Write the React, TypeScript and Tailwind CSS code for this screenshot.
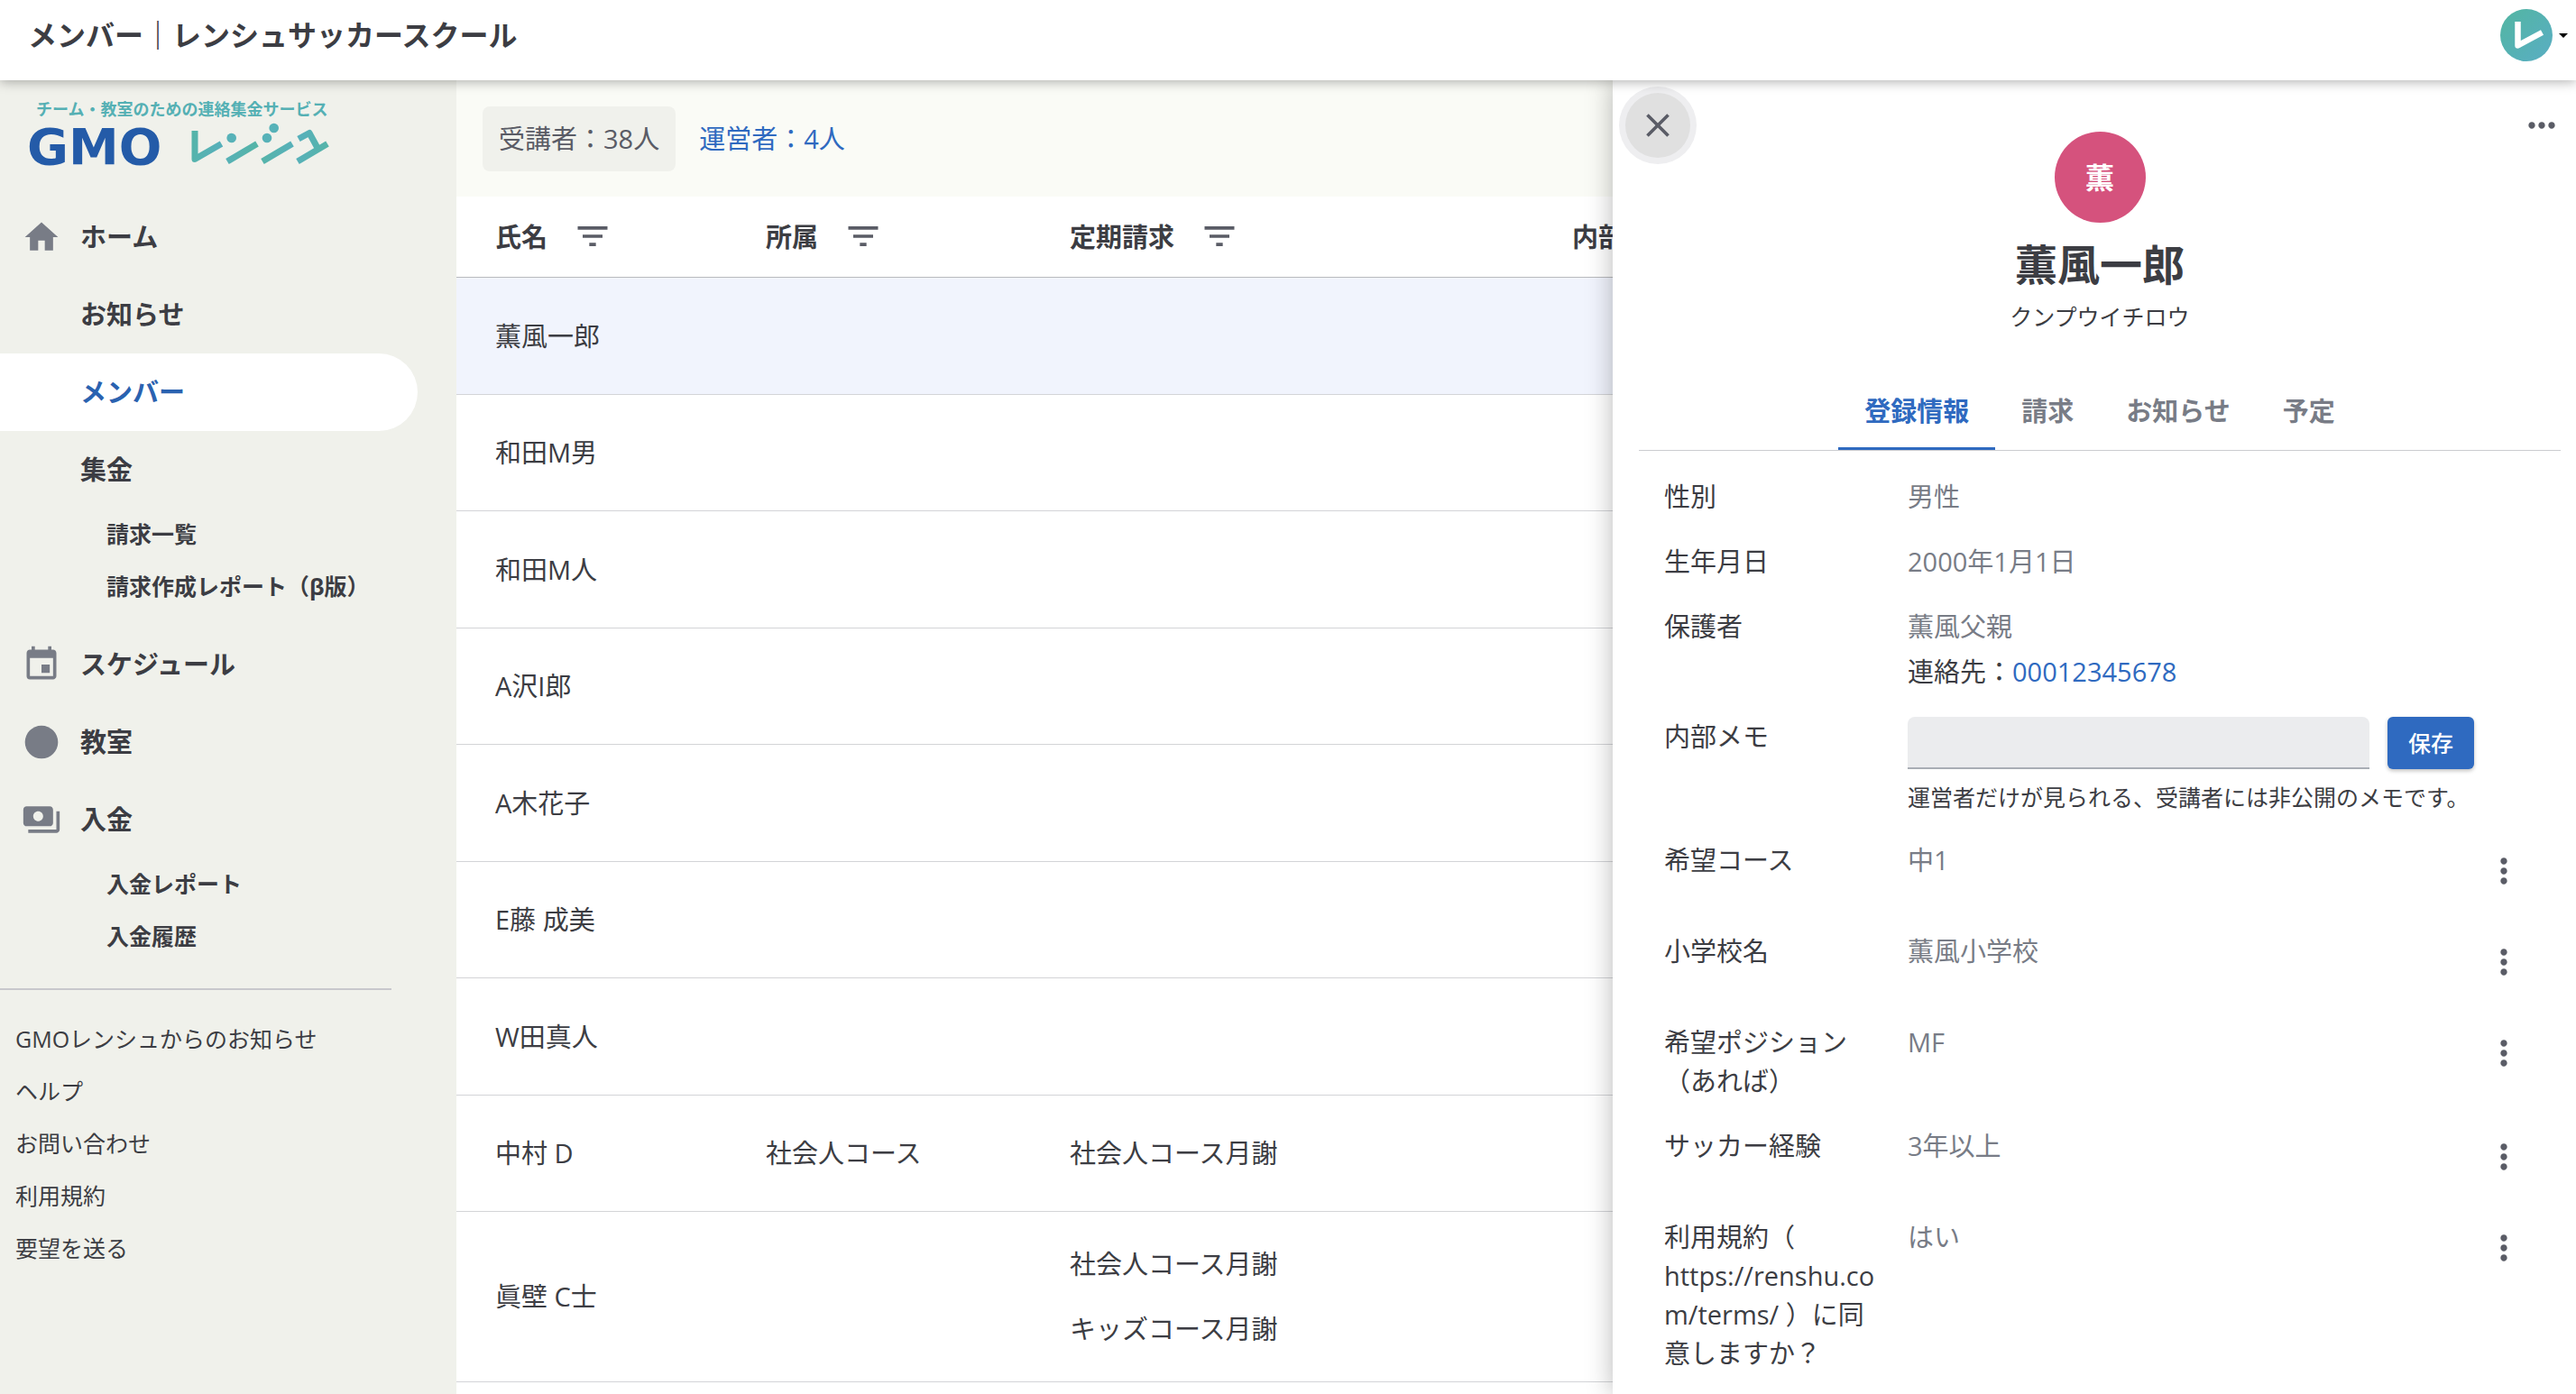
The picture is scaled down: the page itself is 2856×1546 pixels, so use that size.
import { useState } from 'react';
import type { IconType } from 'react-icons';
import {
  MdArrowDropDown,
  MdClose,
  MdEvent,
  MdFilterList,
  MdHome,
  MdLens,
  MdMoreHoriz,
  MdMoreVert,
  MdPayments,
} from 'react-icons/md';

type NavItem = {
  label: string;
  icon?: IconType;
  active?: boolean;
  children?: string[];
};

const navItems: NavItem[] = [
  { label: 'ホーム', icon: MdHome },
  { label: 'お知らせ' },
  { label: 'メンバー', active: true },
  { label: '集金', children: ['請求一覧', '請求作成レポート（β版）'] },
  { label: 'スケジュール', icon: MdEvent },
  { label: '教室', icon: MdLens },
  { label: '入金', icon: MdPayments, children: ['入金レポート', '入金履歴'] },
];

const footerLinks = ['GMOレンシュからのお知らせ', 'ヘルプ', 'お問い合わせ', '利用規約', '要望を送る'];

const members = [
  { name: '薫風一郎', group: '', billing: [] },
  { name: '和田M男', group: '', billing: [] },
  { name: '和田M人', group: '', billing: [] },
  { name: 'A沢I郎', group: '', billing: [] },
  { name: 'A木花子', group: '', billing: [] },
  { name: 'E藤 成美', group: '', billing: [] },
  { name: 'W田真人', group: '', billing: [] },
  { name: '中村 D', group: '社会人コース', billing: ['社会人コース月謝'] },
  { name: '眞壁 C士', group: '', billing: ['社会人コース月謝', 'キッズコース月謝'] },
];

const tabs = ['登録情報', '請求', 'お知らせ', '予定'];

const customFields = [
  { label: '希望コース', value: '中1' },
  { label: '小学校名', value: '薫風小学校' },
  { label: '希望ポジション（あれば）', value: 'MF' },
  { label: 'サッカー経験', value: '3年以上' },
  { label: '利用規約（ https://renshu.com/terms/ ）に同意しますか？', value: 'はい' },
];

const Logo = () => (
  <svg viewBox="0 0 370 100" className="w-[370px] h-[100px]" role="img" aria-label="GMOレンシュ">
    <defs>
      <linearGradient id="brand" gradientUnits="userSpaceOnUse" x1="190" y1="40" x2="345" y2="80">
        <stop offset="0" stopColor="#55b5a6" />
        <stop offset="0.25" stopColor="#57b0bb" />
        <stop offset="0.5" stopColor="#55b5a6" />
        <stop offset="0.75" stopColor="#57b0bb" />
        <stop offset="1" stopColor="#55b5a6" />
      </linearGradient>
    </defs>
    <text x="20" y="28" fontSize="18" fontWeight="700" fill="#55b0b4">
      チーム・教室のための連絡集金サービス
    </text>
    <text x="10" y="82" fontSize="56" fontWeight="700" fontFamily="DejaVu Sans, sans-serif" fill="#245ba8">
      GMO
    </text>
    <g fill="none" stroke="url(#brand)" strokeWidth="7" strokeLinejoin="round">
      <polyline points="196,45 196,76.5 225.5,59.5" />
      <line x1="232" y1="79" x2="265" y2="59.5" />
      <line x1="271" y1="79" x2="304" y2="59.5" />
      <line x1="310" y1="79" x2="343" y2="59.5" />
      <polyline points="311,54 323,47.5 332,64" />
    </g>
    <g fill="#57b2b8">
      <circle cx="236.7" cy="53" r="5.3" />
      <circle cx="276" cy="53" r="5.3" />
      <circle cx="283.7" cy="42" r="5.3" />
    </g>
  </svg>
);

const AvatarMark = () => (
  <svg viewBox="0 0 58 58" className="w-[58px] h-[58px]" aria-hidden="true">
    <defs>
      <linearGradient id="avatar" x1="0" y1="0" x2="1" y2="1">
        <stop offset="0.1" stopColor="#53b5a5" />
        <stop offset="0.8" stopColor="#58afbd" />
      </linearGradient>
    </defs>
    <circle cx="29" cy="29" r="29" fill="url(#avatar)" />
    <polyline
      points="19.5,14 19.5,40.5 46.5,26"
      fill="none"
      stroke="#fff"
      strokeWidth="6.5"
      strokeLinejoin="round"
    />
  </svg>
);

const Header = () => (
  <header className="relative z-20 flex items-center justify-between h-[89px] pl-[31px] pr-0.5 pb-3 bg-white shadow-[0_2px_12px_rgba(0,0,0,0.3)]">
    <h1 className="text-[32px] leading-[48px] font-bold">メンバー｜レンシュサッカースクール</h1>
    <button type="button" aria-label="アカウント" className="flex items-center">
      <AvatarMark />
      <MdArrowDropDown className="size-6 text-black" />
    </button>
  </header>
);

const Sidebar = () => (
  <aside className="w-[506px] shrink-0 pt-[11px] bg-[#f0f1eb] overflow-hidden">
    <a href="#home" className="block ml-5 mb-5 w-fit">
      <Logo />
    </a>
    <nav>
      <ul>
        {navItems.map((item) => (
          <li key={item.label}>
            <a
              href={`#${item.label}`}
              className={`flex items-center gap-[21px] h-[86px] mr-[43px] pl-6 rounded-r-full text-[29px] font-bold ${
                item.active ? 'bg-white text-[#2a62b0]' : ''
              }`}
            >
              <span className="size-11 text-[#787c86]">
                {item.icon && <item.icon className="size-11" />}
              </span>
              {item.label}
            </a>
            {item.children && (
              <ul className="pb-3.5">
                {item.children.map((child) => (
                  <li key={child}>
                    <a href={`#${child}`} className="flex items-center h-[58px] pl-[118px] text-[25px] font-bold">
                      {child}
                    </a>
                  </li>
                ))}
              </ul>
            )}
          </li>
        ))}
      </ul>
    </nav>
    <hr className="mt-3.5 mb-[26px] mr-[72px] border-t-2 border-[#c8c8cc]" />
    <ul>
      {footerLinks.map((link) => (
        <li key={link}>
          <a href={`#${link}`} className="flex items-center h-[58px] pl-[17px] text-[25px]">
            {link}
          </a>
        </li>
      ))}
    </ul>
  </aside>
);

const FilterHeading = ({ label }: { label: string }) => (
  <div className="flex items-center gap-7">
    {label}
    <button type="button" aria-label={`${label}で絞り込む`} className="text-[#5a5c66]">
      <MdFilterList className="size-11" />
    </button>
  </div>
);

const MemberTable = () => (
  <table className="w-full table-fixed text-left text-[29px] leading-[43px]">
    <thead>
      <tr className="h-[89px] border-b border-[#b9babd]">
        <th className="w-[300px] pl-[43px]"><FilterHeading label="氏名" /></th>
        <th className="w-[337px] pl-[43px]"><FilterHeading label="所属" /></th>
        <th className="w-[557px] pl-[43px]"><FilterHeading label="定期請求" /></th>
        <th className="pl-[43px]">内部メモ</th>
      </tr>
    </thead>
    <tbody>
      {members.map((member, i) => (
        <tr
          key={member.name}
          className={`odd:h-[130px] even:h-[129px] border-b border-[#d3d4d7] ${i === 0 ? 'bg-[#f1f4fd]' : ''}`}
        >
          <td className="pl-[43px]">{member.name}</td>
          <td className="pl-[43px]">{member.group}</td>
          <td className="pl-[43px] py-[22px]">
            {member.billing.map((plan) => (
              <div key={plan} className="flex items-center h-[72px]">{plan}</div>
            ))}
          </td>
          <td />
        </tr>
      ))}
    </tbody>
  </table>
);

const MemberDrawer = () => {
  const [activeTab, setActiveTab] = useState('登録情報');
  const [memo, setMemo] = useState('');

  return (
    <section
      aria-label="メンバー詳細"
      className="absolute inset-y-0 right-0 z-10 w-[1068px] max-w-full pl-[29px] pr-[17px] bg-white shadow-[0_0_28px_rgba(0,0,0,0.28)] overflow-hidden"
    >
      <button
        type="button"
        aria-label="閉じる"
        className="absolute top-3.5 left-3.5 flex items-center justify-center size-[72px] rounded-full bg-[#e0e0e0] text-[#5a5c66] ring-7 ring-[#eeeef0]"
      >
        <MdClose className="size-11" />
      </button>
      <button type="button" aria-label="メニュー" className="absolute top-7 right-4 text-[#5a5c66]">
        <MdMoreHoriz className="size-11" />
      </button>

      <div className="flex flex-col items-center pt-[57px]">
        <div className="flex items-center justify-center size-[101px] rounded-full bg-[#d5527d] text-[32px] font-bold text-white">
          薫
        </div>
        <h2 className="mt-[11px] text-[47px] leading-[70px] font-bold">薫風一郎</h2>
        <p className="mt-1 text-[25px] leading-[38px]">クンプウイチロウ</p>
      </div>

      <div role="tablist" className="flex justify-center mt-[43px] border-b border-[#cbccd0]">
        {tabs.map((tab) => (
          <button
            key={tab}
            type="button"
            role="tab"
            aria-selected={tab === activeTab}
            onClick={() => setActiveTab(tab)}
            className={`h-[86px] px-[29px] border-y-3 border-t-transparent text-[29px] font-bold ${
              tab === activeTab ? 'border-b-[#2f6ac0] text-[#2f6ac0]' : 'border-b-transparent text-[#787c86]'
            }`}
          >
            {tab}
          </button>
        ))}
      </div>

      <dl className="flex flex-col gap-[29px] mt-[29px] pl-7 text-[29px] leading-[43px] [&_dt]:w-[243px] [&_dt]:mr-[27px] [&_dt]:shrink-0 [&_dd]:flex-1 [&_dd]:text-[#787c86]">
        <div className="flex">
          <dt>性別</dt>
          <dd>男性</dd>
        </div>
        <div className="flex">
          <dt>生年月日</dt>
          <dd>2000年1月1日</dd>
        </div>
        <div className="flex">
          <dt>保護者</dt>
          <dd>
            <p>薫風父親</p>
            <p className="mt-[7px] text-[#3c3d43]">
              連絡先：<a href="tel:00012345678" className="text-[#2f6ac0]">00012345678</a>
            </p>
          </dd>
        </div>
        <div className="flex">
          <dt><label htmlFor="memo">内部メモ</label></dt>
          <dd>
            <div className="flex gap-5">
              <input
                id="memo"
                type="text"
                value={memo}
                onChange={(e) => setMemo(e.target.value)}
                className="w-[512px] h-[58px] px-4 rounded-t-lg border-b-2 border-[#a9adb5] bg-[#ebecee] text-[#3c3d43] outline-none"
              />
              <button
                type="button"
                className="w-24 h-[58px] rounded-md bg-[#2f6ac0] text-[25px] font-medium text-white shadow-[0_2px_4px_rgba(0,0,0,0.25)]"
              >
                保存
              </button>
            </div>
            <p className="mt-3 text-[25px] leading-[38px] text-[#3c3d43]">
              運営者だけが見られる、受講者には非公開のメモです。
            </p>
          </dd>
        </div>
        {customFields.map((field) => (
          <div key={field.label} className="flex items-start min-h-[72px]">
            <dt className="break-words">{field.label}</dt>
            <dd>{field.value}</dd>
            <button
              type="button"
              aria-label={`${field.label}のメニュー`}
              className="flex items-center justify-center w-[68px] h-[68px] mr-[29px] text-[#5a5c66]"
            >
              <MdMoreVert className="size-11" />
            </button>
          </div>
        ))}
      </dl>
    </section>
  );
};

const App = () => {
  return (
    <div
      lang="ja"
      className="flex flex-col h-screen overflow-hidden bg-white text-[#3c3d43] font-['Open_Sans','Noto_Sans_CJK_JP',sans-serif]"
    >
      <Header />
      <div className="relative flex flex-1 min-h-0">
        <Sidebar />
        <main className="flex-1 min-w-0 overflow-hidden">
          <div className="flex gap-2 pt-[29px] pb-7 pl-[29px] bg-[#fafbf6] text-[29px]">
            <button type="button" className="h-[72px] px-[18px] rounded-lg bg-[#f0f1ec] text-[#5a5c66]">
              受講者：38人
            </button>
            <button type="button" className="h-[72px] px-[18px] rounded-lg text-[#2f6ac0]">
              運営者：4人
            </button>
          </div>
          <MemberTable />
        </main>
        <MemberDrawer />
      </div>
    </div>
  );
};

export default App;
